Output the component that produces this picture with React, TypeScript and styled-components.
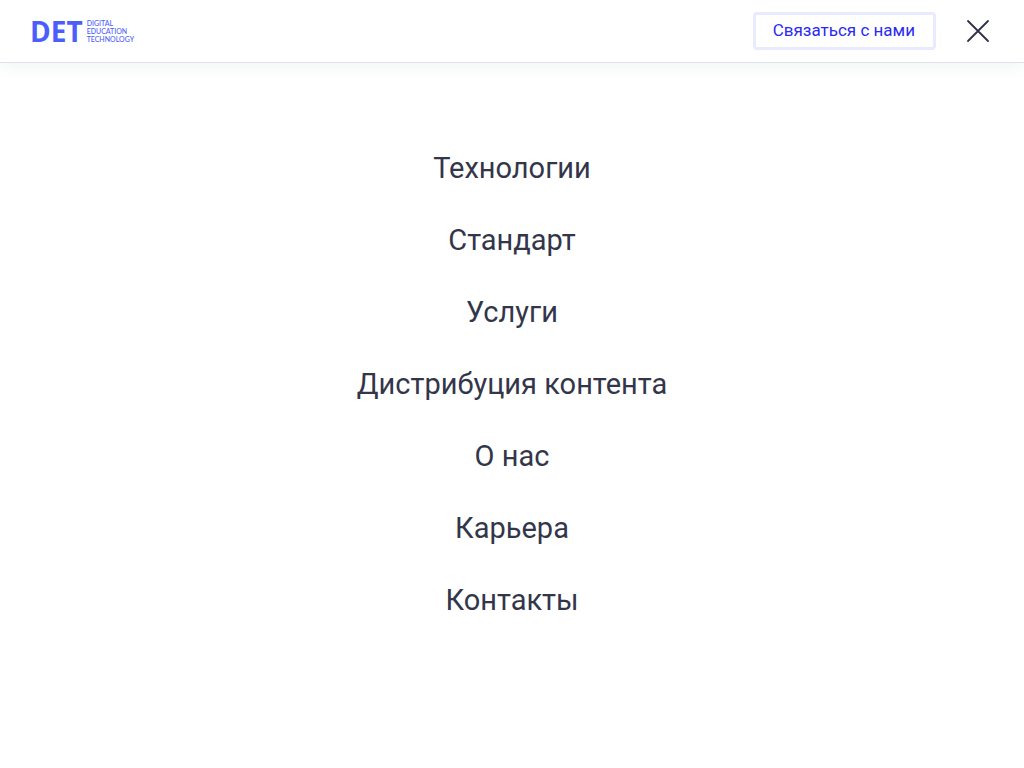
import React from "react";
import styled, { createGlobalStyle } from "styled-components";

const GlobalStyle = createGlobalStyle`
  *, *::before, *::after { box-sizing: border-box; }
  body {
    margin: 0;
    background: #fff;
    color: #33364a;
    font-family: Roboto, "Liberation Sans", sans-serif;
  }
`;

const Header = styled.header`
  display: flex;
  align-items: center;
  justify-content: space-between;
  padding: 12px 32px 12px 30px;
  border-bottom: 1px solid #dfe2ea;
  box-shadow: 0 4px 16px rgba(40, 70, 90, 0.06);
`;

const Logo = styled.a`
  display: flex;
  align-items: center;
  gap: 4px;
  color: #4b5dfa;
  text-decoration: none;
`;

const LogoMark = styled.span`
  font: 700 28px/32px "Open Sans", sans-serif;
`;

const LogoCaption = styled.span`
  display: flex;
  flex-direction: column;
  font: 500 7px/8px Lato, sans-serif;
`;

const Actions = styled.div`
  display: flex;
  align-items: center;
  gap: 28px;
`;

const ContactButton = styled.button`
  padding: 3px 18px 5px 17px;
  border: 3px solid #e9e9ff;
  border-radius: 4px;
  background: #fff;
  color: #2a2af5;
  font: 400 17px/24px Roboto, sans-serif;
  cursor: pointer;
`;

const CloseButton = styled.button`
  display: flex;
  padding: 0;
  border: 0;
  background: none;
  color: #2d3047;
  cursor: pointer;
`;

const Menu = styled.ul`
  display: flex;
  flex-direction: column;
  align-items: center;
  gap: 36px;
  margin: 0;
  padding: 87px 32px;
  list-style: none;
`;

const MenuLink = styled.a`
  display: block;
  color: inherit;
  font-size: 29px;
  line-height: 36px;
  text-align: center;
  text-decoration: none;
`;

const sections = [
  "Технологии",
  "Стандарт",
  "Услуги",
  "Дистрибуция контента",
  "О нас",
  "Карьера",
  "Контакты",
];

export default function App() {
  return (
    <>
      <GlobalStyle />
      <Header>
        <Logo href="#">
          <LogoMark>DET</LogoMark>
          <LogoCaption>
            <span>DIGITAL</span>
            <span>EDUCATION</span>
            <span>TECHNOLOGY</span>
          </LogoCaption>
        </Logo>
        <Actions>
          <ContactButton type="button">Связаться с нами</ContactButton>
          <CloseButton type="button" aria-label="Закрыть меню">
            <svg width="28" height="28" viewBox="0 0 28 28" fill="none" stroke="currentColor" strokeWidth="1.8" strokeLinecap="round">
              <path d="M4 4 24 24M24 4 4 24" />
            </svg>
          </CloseButton>
        </Actions>
      </Header>
      <nav>
        <Menu>
          {sections.map((name) => (
            <li key={name}>
              <MenuLink href="#">{name}</MenuLink>
            </li>
          ))}
        </Menu>
      </nav>
    </>
  );
}
